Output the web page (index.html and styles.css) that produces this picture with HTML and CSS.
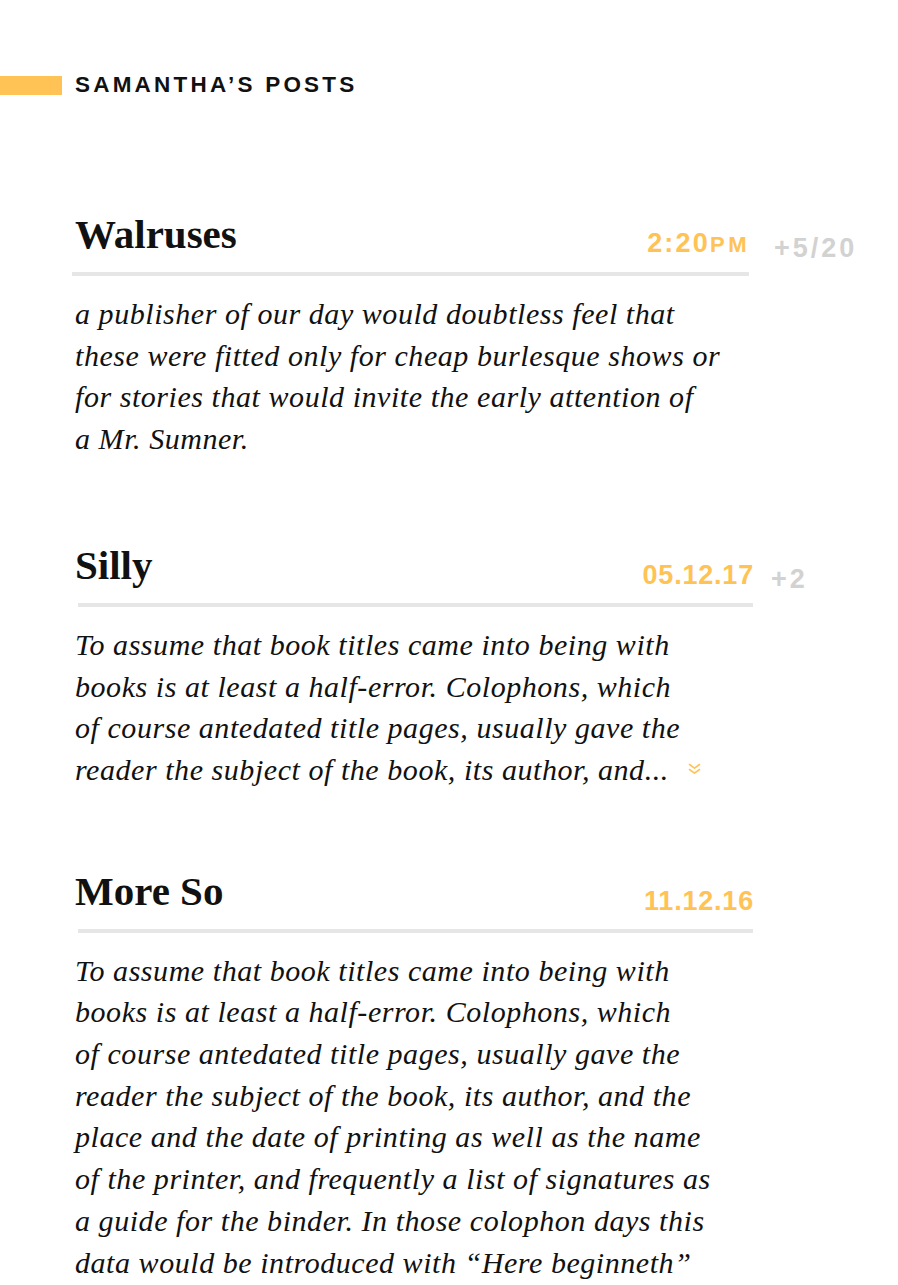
FILE: index.html
```html
<!DOCTYPE html>
<html lang="en">
<head>
<meta charset="utf-8">
<title>Samantha’s Posts</title>
<link rel="stylesheet" href="styles.css">
</head>
<body>
<div class="page">
  <header class="page-header">
    <span class="page-header-bar"></span>
    <h1 class="page-title">Samantha’s Posts</h1>
  </header>

  <main class="posts">
    <article class="post post-first">
      <div class="post-head">
        <div class="post-head-main post-head-main-shift">
          <h2 class="post-title">Walruses</h2>
          <span class="post-time post-time-clock">2:20<span class="post-time-suffix">PM</span></span>
        </div>
        <span class="post-extra">+5/20</span>
      </div>
      <p class="post-body">a publisher of our day would doubtless feel that<br>these were fitted only for cheap burlesque shows or<br>for stories that would invite the early attention of<br>a Mr. Sumner.</p>
    </article>

    <article class="post post-second">
      <div class="post-head">
        <div class="post-head-main">
          <h2 class="post-title">Silly</h2>
          <span class="post-time">05.12.17</span>
        </div>
        <span class="post-extra">+2</span>
      </div>
      <p class="post-body">To assume that book titles came into being with<br>books is at least a half-error. Colophons, which<br>of course antedated title pages, usually gave the<br>reader the subject of the book, its author, and...<span class="post-more"><svg width="15" height="12" viewBox="0 0 15 12" fill="none" stroke="#ffc254" stroke-width="1.6" stroke-linecap="round" stroke-linejoin="round"><path d="M2.5 1.5 7.5 5.2 12.5 1.5"/><path d="M2.5 6.5 7.5 10.2 12.5 6.5"/></svg></span></p>
    </article>

    <article class="post post-third">
      <div class="post-head">
        <div class="post-head-main">
          <h2 class="post-title">More So</h2>
          <span class="post-time">11.12.16</span>
        </div>
      </div>
      <p class="post-body">To assume that book titles came into being with<br>books is at least a half-error. Colophons, which<br>of course antedated title pages, usually gave the<br>reader the subject of the book, its author, and the<br>place and the date of printing as well as the name<br>of the printer, and frequently a list of signatures as<br>a guide for the binder. In those colophon days this<br>data would be introduced with “Here beginneth”</p>
    </article>
  </main>
</div>
</body>
</html>
```

FILE: styles.css
```css
html, body {
  margin: 0;
  padding: 0;
  background: #ffffff;
}

body {
  font-family: "Liberation Serif", "Times New Roman", serif;
  color: #111111;
}

.page {
  padding-top: 75px;
}

.page-header {
  display: flex;
  align-items: center;
  gap: 13px;
  height: 20px;
}

.page-header-bar {
  display: block;
  width: 62px;
  height: 19px;
  background: #ffc254;
}

.page-title {
  margin: 0;
  font-family: "Liberation Sans", Arial, sans-serif;
  font-weight: 700;
  font-size: 22.5px;
  line-height: 20px;
  letter-spacing: 3.2px;
  text-transform: uppercase;
  color: #111111;
}

.posts {
  display: flex;
  flex-direction: column;
  padding-left: 75px;
  padding-top: 119px;
}

.post-second {
  margin-top: 85px;
}

.post-third {
  margin-top: 80px;
}

.post-head {
  display: flex;
  align-items: flex-end;
}

.post-head-main {
  display: flex;
  align-items: flex-end;
  justify-content: space-between;
  width: 675px;
  margin-left: 3px;
  padding-left: 0;
  padding-bottom: 14px;
  border-bottom: 4px solid #e6e6e6;
}

.post-head-main-shift {
  width: 674px;
  margin-left: -3px;
  padding-left: 3px;
}

.post-head-main .post-title {
  margin-left: -3px;
}

.post-head-main-shift .post-title {
  margin-left: 0;
}

.post-title {
  margin: 0;
  padding-bottom: 3px;
  font-family: "Liberation Serif", "Times New Roman", serif;
  font-weight: 700;
  font-size: 41px;
  line-height: 41px;
  color: #111111;
}

.post-time {
  font-family: "Liberation Sans", Arial, sans-serif;
  font-weight: 700;
  font-size: 27px;
  line-height: 27px;
  letter-spacing: 0.8px;
  color: #ffc254;
  margin-right: -1px;
}

.post-time-clock {
  letter-spacing: 2.2px;
}

.post-time-suffix {
  font-size: 22px;
  letter-spacing: 3.5px;
}

.post-extra {
  font-family: "Liberation Sans", Arial, sans-serif;
  font-weight: 700;
  font-size: 27px;
  line-height: 27px;
  letter-spacing: 3px;
  color: #d2d2d2;
  margin-left: 18px;
  margin-bottom: 14px;
}

.post-first .post-extra {
  margin-left: 25px;
}

.post-body {
  margin: 17px 0 0 0;
  font-family: "Liberation Serif", "Times New Roman", serif;
  font-style: italic;
  font-size: 30px;
  line-height: 41.7px;
  letter-spacing: 0.55px;
  white-space: nowrap;
  color: #111111;
}

.post-more {
  display: inline-block;
  margin-left: 18px;
  vertical-align: 5px;
}

.post-more svg {
  display: block;
}
```
